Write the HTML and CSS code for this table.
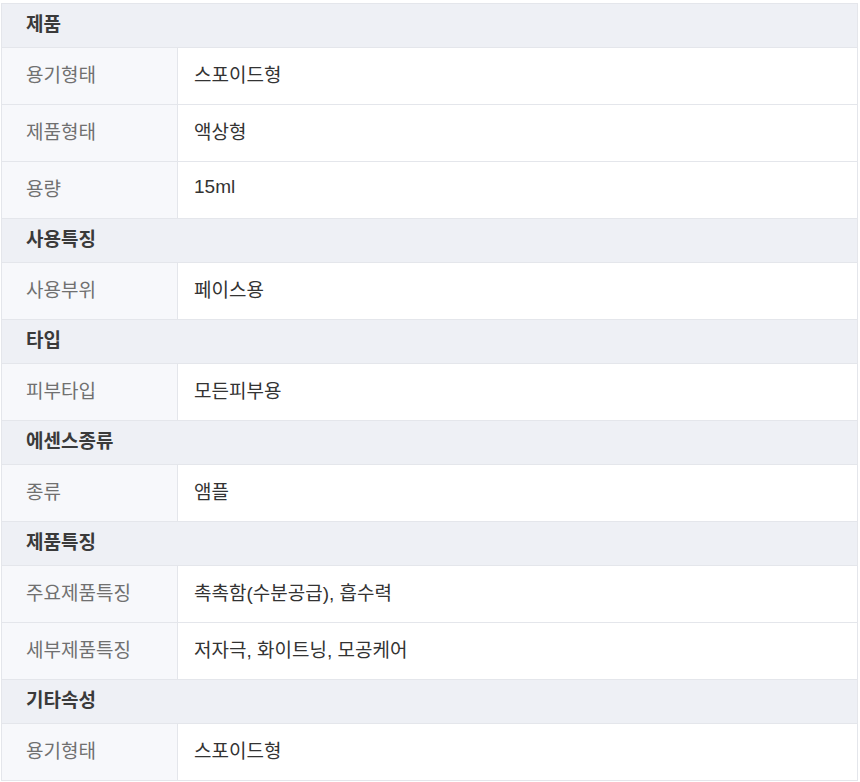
FILE: index.html
```html
<!DOCTYPE html>
<html lang="ko">
<head>
<meta charset="utf-8">
<title>상품 정보</title>
<link rel="stylesheet" href="styles.css">
</head>
<body>
<div class="wrap">
<table class="spec">
  <colgroup><col class="c-label"><col class="c-value"></colgroup>
  <tbody>
    <tr class="group"><th colspan="2">제품</th></tr>
    <tr><th>용기형태</th><td>스포이드형</td></tr>
    <tr><th>제품형태</th><td>액상형</td></tr>
    <tr><th>용량</th><td>15ml</td></tr>
    <tr class="group"><th colspan="2">사용특징</th></tr>
    <tr><th>사용부위</th><td>페이스용</td></tr>
    <tr class="group"><th colspan="2">타입</th></tr>
    <tr><th>피부타입</th><td>모든피부용</td></tr>
    <tr class="group"><th colspan="2">에센스종류</th></tr>
    <tr><th>종류</th><td>앰플</td></tr>
    <tr class="group"><th colspan="2">제품특징</th></tr>
    <tr><th>주요제품특징</th><td>촉촉함(수분공급), 흡수력</td></tr>
    <tr><th>세부제품특징</th><td>저자극, 화이트닝, 모공케어</td></tr>
    <tr class="group"><th colspan="2">기타속성</th></tr>
    <tr><th>용기형태</th><td>스포이드형</td></tr>
  </tbody>
</table>
</div>
</body>
</html>
```
FILE: styles.css
```css
html, body {
  margin: 0;
  padding: 0;
  background: #ffffff;
}
.wrap {
  padding: 3px 2px 0 1px;
}
.spec {
  width: 100%;
  border-collapse: collapse;
  table-layout: fixed;
  border: 1px solid #e4e6eb;
  font-family: "Liberation Sans", "Noto Sans CJK KR", sans-serif;
  font-size: 19px;
}
.c-label { width: 176px; }
.spec th, .spec td {
  text-align: left;
  vertical-align: middle;
  border-bottom: 1px solid #e4e6eb;
  padding: 0 0 6px 24px;
  height: 57px;
  box-sizing: border-box;
}
.spec tr > th {
  background: #f7f8fb;
  color: #707070;
  font-weight: normal;
  border-right: 1px solid #e4e6eb;
}
.spec td {
  color: #333333;
  padding-left: 16px;
  background: #ffffff;
}
.spec tr.group > th {
  background: #eef0f5;
  color: #3a3a3a;
  font-weight: bold;
  height: 44px;
  border-right: none;
}
```
